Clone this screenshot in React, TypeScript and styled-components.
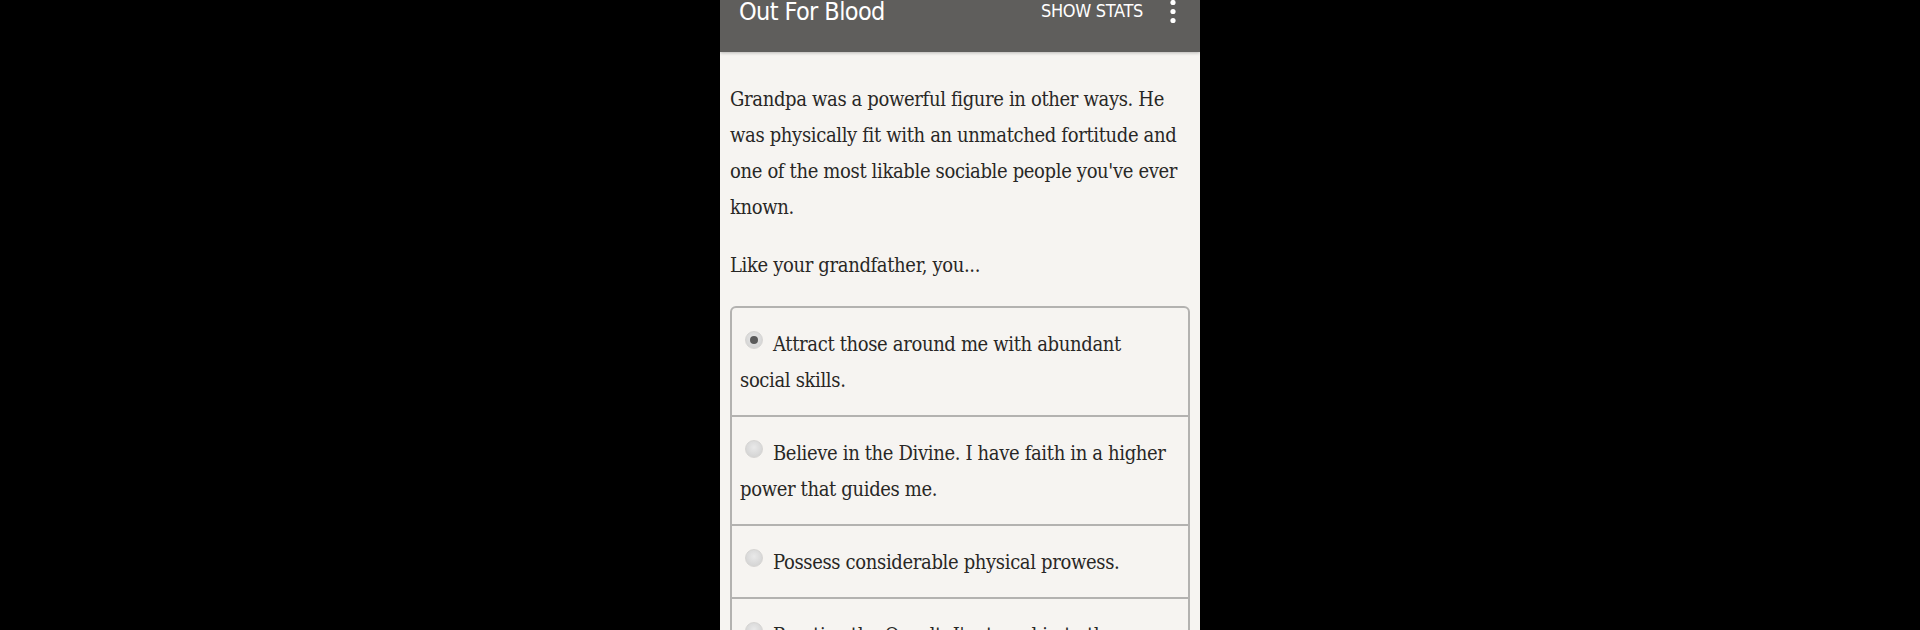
import React, { useState } from "react";
import styled, { createGlobalStyle } from "styled-components";

const GlobalStyle = createGlobalStyle`
  html, body {
    margin: 0;
    padding: 0;
    background: #000000;
    height: 630px;
    overflow: hidden;
  }
`;

const Phone = styled.div`
  width: 480px;
  height: 630px;
  margin: 0 auto;
  background: #f6f4f1;
  display: flex;
  flex-direction: column;
  overflow: hidden;
`;

const Header = styled.div`
  height: 52px;
  flex-shrink: 0;
  background: #5f5e5c;
  box-shadow: 0 1px 3px rgba(0, 0, 0, 0.25);
  display: flex;
  align-items: flex-start;
  padding: 0 23px 0 19px;
  color: #ffffff;
  position: relative;
  z-index: 1;
`;

const Title = styled.div`
  font-family: "DejaVu Sans Condensed", "Roboto", sans-serif;
  font-size: 25px;
  letter-spacing: -0.6px;
  line-height: 23px;
  flex: 1;
`;

const ActionButton = styled.div`
  font-family: "DejaVu Sans Condensed", "Roboto", sans-serif;
  font-size: 18px;
  letter-spacing: -0.3px;
  line-height: 22px;
  margin-right: 26px;
`;

const Overflow = styled.svg`
  width: 8px;
  height: 24px;
  display: block;
`;

const Content = styled.div`
  padding: 29px 10px 0 10px;
  font-family: "DejaVu Serif Condensed", "Liberation Serif", serif;
  font-size: 20px;
  letter-spacing: -0.35px;
  line-height: 36px;
  color: #282725;
`;

const Para = styled.p`
  margin: 0 0 22px 0;
`;

const ChoiceBox = styled.div`
  margin-top: 23px;
  border: 2px solid #b3b2b0;
  border-radius: 6px;
  overflow: hidden;
`;

const Choice = styled.label`
  display: block;
  padding: 18px 16px 17px 8px;
  cursor: pointer;
  & + & {
    border-top: 2px solid #b3b2b0;
  }
`;

const Radio = styled.span<{ $checked: boolean }>`
  display: inline-block;
  width: 18px;
  height: 18px;
  border-radius: 50%;
  margin: 0 10px 0 5px;
  vertical-align: 2px;
  box-sizing: border-box;
  border: 1px solid #d6d5d3;
  background: radial-gradient(circle at 50% 40%, #e9e9e9 0%, #d6d6d6 70%, #cfcfcf 100%);
  position: relative;
  &::after {
    content: "";
    display: ${(p) => (p.$checked ? "block" : "none")};
    position: absolute;
    left: 4px;
    top: 4px;
    width: 8px;
    height: 8px;
    border-radius: 50%;
    background: #5a5a5a;
  }
`;

const choices = [
  "Attract those around me with abundant social skills.",
  "Believe in the Divine. I have faith in a higher power that guides me.",
  "Possess considerable physical prowess.",
  "Practice the Occult. I'm tuned in to the supernatural.",
];

export default function App() {
  const [selected, setSelected] = useState(0);

  return (
    <>
      <GlobalStyle />
      <Phone>
        <Header>
          <Title>Out For Blood</Title>
          <ActionButton>SHOW STATS</ActionButton>
          <Overflow viewBox="0 0 8 24">
            <circle cx="4" cy="2.5" r="2.6" fill="#fff" />
            <circle cx="4" cy="11.5" r="2.6" fill="#fff" />
            <circle cx="4" cy="20.5" r="2.6" fill="#fff" />
          </Overflow>
        </Header>
        <Content>
          <Para>
            Grandpa was a powerful figure in other ways. He was physically fit
            with an unmatched fortitude and one of the most likable sociable
            people you've ever known.
          </Para>
          <Para>Like your grandfather, you...</Para>
          <ChoiceBox>
            {choices.map((c, i) => (
              <Choice key={i} onClick={() => setSelected(i)}>
                <Radio $checked={selected === i} />
                {c}
              </Choice>
            ))}
          </ChoiceBox>
        </Content>
      </Phone>
    </>
  );
}
